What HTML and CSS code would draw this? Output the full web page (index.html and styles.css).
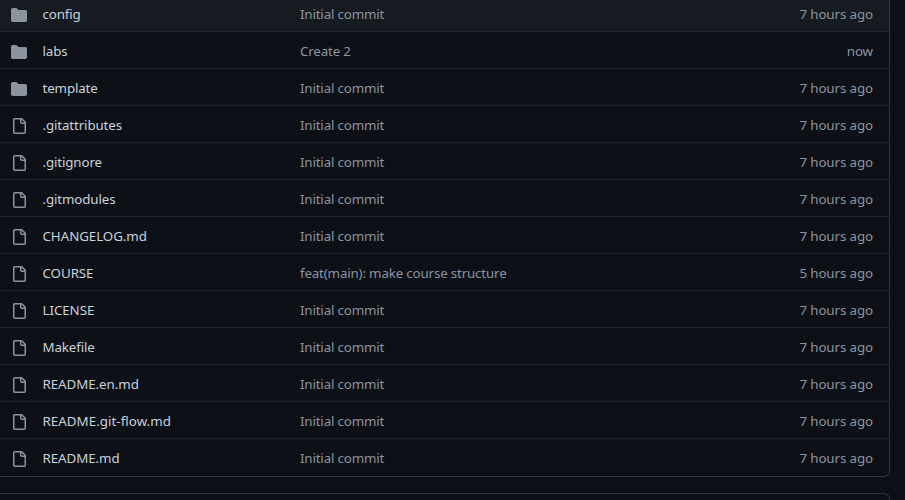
FILE: index.html
```
<!DOCTYPE html>
<html lang="en">
<head>
<meta charset="utf-8">
<title>Repository files</title>
<link rel="stylesheet" href="styles.css">
</head>
<body>
<svg class="sprite" width="0" height="0" aria-hidden="true">
<symbol id="folder" viewBox="0 0 16 16"><path d="M1.75 1A1.75 1.75 0 0 0 0 2.75v10.5C0 14.216.784 15 1.75 15h12.5A1.75 1.75 0 0 0 16 13.25v-8.5A1.75 1.75 0 0 0 14.25 3H7.5a.25.25 0 0 1-.2-.1l-.9-1.2C6.07 1.26 5.55 1 5 1H1.75Z"/></symbol>
<symbol id="file" viewBox="0 0 16 16"><path d="M2 1.75C2 .784 2.784 0 3.75 0h6.586c.464 0 .909.184 1.237.513l2.914 2.914c.329.328.513.773.513 1.237v9.586A1.75 1.75 0 0 1 13.25 16h-9.5A1.75 1.75 0 0 1 2 14.25Zm1.75-.25a.25.25 0 0 0-.25.25v12.5c0 .138.112.25.25.25h9.5a.25.25 0 0 0 .25-.25V6h-2.75A1.75 1.75 0 0 1 9 4.25V1.5Zm6.75.062V4.25c0 .138.112.25.25.25h2.688l-.011-.013-2.914-2.914-.013-.011Z"/></symbol>
</svg>
<main class="files">
<div class="row latest"><svg class="icon"><use href="#folder"/></svg><span class="name">config</span><span class="message">Initial commit</span><time class="age">7 hours ago</time></div>
<div class="row"><svg class="icon"><use href="#folder"/></svg><span class="name">labs</span><span class="message">Create 2</span><time class="age">now</time></div>
<div class="row"><svg class="icon"><use href="#folder"/></svg><span class="name">template</span><span class="message">Initial commit</span><time class="age">7 hours ago</time></div>
<div class="row"><svg class="icon"><use href="#file"/></svg><span class="name">.gitattributes</span><span class="message">Initial commit</span><time class="age">7 hours ago</time></div>
<div class="row"><svg class="icon"><use href="#file"/></svg><span class="name">.gitignore</span><span class="message">Initial commit</span><time class="age">7 hours ago</time></div>
<div class="row"><svg class="icon"><use href="#file"/></svg><span class="name">.gitmodules</span><span class="message">Initial commit</span><time class="age">7 hours ago</time></div>
<div class="row"><svg class="icon"><use href="#file"/></svg><span class="name caps">CHANGELOG.md</span><span class="message">Initial commit</span><time class="age">7 hours ago</time></div>
<div class="row"><svg class="icon"><use href="#file"/></svg><span class="name caps">COURSE</span><span class="message">feat(main): make course structure</span><time class="age">5 hours ago</time></div>
<div class="row"><svg class="icon"><use href="#file"/></svg><span class="name caps">LICENSE</span><span class="message">Initial commit</span><time class="age">7 hours ago</time></div>
<div class="row"><svg class="icon"><use href="#file"/></svg><span class="name">Makefile</span><span class="message">Initial commit</span><time class="age">7 hours ago</time></div>
<div class="row"><svg class="icon"><use href="#file"/></svg><span class="name caps">README.en.md</span><span class="message">Initial commit</span><time class="age">7 hours ago</time></div>
<div class="row"><svg class="icon"><use href="#file"/></svg><span class="name mixed">README.git-flow.md</span><span class="message">Initial commit</span><time class="age">7 hours ago</time></div>
<div class="row"><svg class="icon"><use href="#file"/></svg><span class="name caps">README.md</span><span class="message">Initial commit</span><time class="age">7 hours ago</time></div>
</main>
<section class="readme"></section>
</body>
</html>
```
FILE: styles.css
```
* { box-sizing: border-box; }
body {
  margin: 0;
  height: 500px;
  overflow: hidden;
  background: #0d1017;
  color: #c9d1d9;
  font: 13.33px/20px "Noto Sans", sans-serif;
}
.sprite { display: block; }
.files {
  width: 890px;
  height: 477px;
  border: solid #30363d;
  border-width: 0 1px 1px 0;
  border-radius: 0 0 6px 0;
  overflow: hidden;
}
.row {
  display: grid;
  grid-template-columns: 16px 242px 1fr auto;
  column-gap: 15.5px;
  height: 37px;
  padding: 9px 16px 0 11px;
  border-top: 1px solid #21262d;
  white-space: nowrap;
}
.row.latest {
  height: 31px;
  padding-top: 4px;
  border-top: 0;
  background: #161b22;
}
.icon { width: 16px; height: 16px; margin-top: 3px; fill: #8b949e; }
.name { letter-spacing: -0.13px; }
.name.caps { letter-spacing: -0.06px; }
.name.mixed { letter-spacing: 0.04px; }
.message, .age { color: #8b949e; }
.message { letter-spacing: -0.16px; }
.age { letter-spacing: -0.1px; }
.readme {
  width: 890px;
  height: 7px;
  margin-top: 16px;
  border: solid #30363d;
  border-width: 1px 1px 0 0;
  border-radius: 0 6px 0 0;
}
```
